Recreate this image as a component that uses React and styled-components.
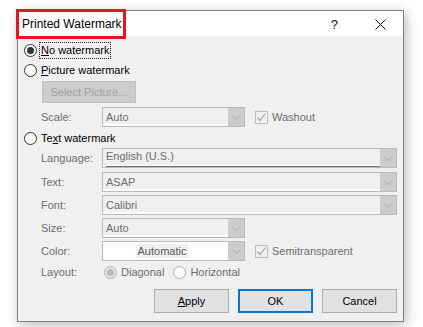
import React from 'react'
import styled, { createGlobalStyle } from 'styled-components'

const Global = createGlobalStyle`
    html, body {
        margin: 0;
        padding: 0;
        background: #ffffff;
    }
    body {
        font-family: "Liberation Sans", Arial, sans-serif;
        font-size: 11px;
        color: #000;
    }
`

function Chevron() {
    return (
        <svg width="9" height="5" viewBox="0 0 9 5">
            <path d="M0.5 0.5 L4.5 4.5 L8.5 0.5" fill="none" stroke="#a9a9a9" strokeWidth="1" />
        </svg>
    )
}

function Combo({ width, value, center, white, language }) {
    return (
        <ComboBox $width={width} $white={white}>
            <ComboField $center={center}>
                {language ? (
                    <LangValue>{value}</LangValue>
                ) : center ? (
                    <Highlight>{value}</Highlight>
                ) : (
                    value
                )}
            </ComboField>
            <ComboArrow>
                <Chevron />
            </ComboArrow>
        </ComboBox>
    )
}

function Check({ label }) {
    return (
        <CheckWrap>
            <CheckBox>
                <svg width="11" height="11" viewBox="0 0 11 11">
                    <path d="M1.5 5.5 L4 8.5 L9.5 1.5" fill="none" stroke="#a6a6a6" strokeWidth="1.2" />
                </svg>
            </CheckBox>
            <GreyText>{label}</GreyText>
        </CheckWrap>
    )
}

function App() {
    return (
        <Page>
            <Global />
            <Window>
                <TitleBar>
                    <Title>Printed Watermark</Title>
                    <TitleButtons>
                        <Help>?</Help>
                        <svg width="11" height="11" viewBox="0 0 11 11">
                            <path d="M0.5 0.5 L10.5 10.5 M10.5 0.5 L0.5 10.5" stroke="#111" strokeWidth="1" />
                        </svg>
                    </TitleButtons>
                </TitleBar>
                <Body>
                    <RadioRow $top={6}>
                        <Radio $checked />
                        <Focus><u>N</u>o watermark</Focus>
                    </RadioRow>
                    <RadioRow $top={4}>
                        <Radio />
                        <span><u>P</u>icture watermark</span>
                    </RadioRow>
                    <SelectButton>Select Picture...</SelectButton>
                    <FieldRow $top={4}>
                        <Label>Scale:</Label>
                        <Combo width={143} value="Auto" />
                        <Check label="Washout" />
                    </FieldRow>
                    <RadioRow $top={3}>
                        <Radio />
                        <span>Te<u>x</u>t watermark</span>
                    </RadioRow>
                    <FieldRow $top={2}>
                        <Label>Language:</Label>
                        <Combo width={295} value="English (U.S.)" language />
                    </FieldRow>
                    <FieldRow $top={4}>
                        <Label>Text:</Label>
                        <Combo width={295} value="ASAP" />
                    </FieldRow>
                    <FieldRow $top={3}>
                        <Label>Font:</Label>
                        <Combo width={295} value="Calibri" />
                    </FieldRow>
                    <FieldRow $top={3}>
                        <Label>Size:</Label>
                        <Combo width={143} value="Auto" />
                    </FieldRow>
                    <FieldRow $top={3}>
                        <Label>Color:</Label>
                        <Combo width={143} value="Automatic" center white />
                        <Check label="Semitransparent" />
                    </FieldRow>
                    <FieldRow $top={3} $height={16}>
                        <Label>Layout:</Label>
                        <LayoutOption $left={2}>
                            <SmallRadio $checked />
                            <GreyText>Diagonal</GreyText>
                        </LayoutOption>
                        <LayoutOption $left={9}>
                            <SmallRadio />
                            <GreyText>Horizontal</GreyText>
                        </LayoutOption>
                    </FieldRow>
                    <ButtonRow>
                        <DialogButton><u>A</u>pply</DialogButton>
                        <DialogButton $primary>OK</DialogButton>
                        <DialogButton>Cancel</DialogButton>
                    </ButtonRow>
                </Body>
            </Window>
            <Marker />
        </Page>
    )
}

export default App

const Page = styled.div`
    position: relative;
    width: 423px;
    height: 327px;
    padding: 10px 0 0 17px;
    box-sizing: border-box;
    overflow: hidden;
`

const Window = styled.div`
    width: 387px;
    height: 312px;
    box-sizing: border-box;
    border: 1px solid #7f7f7f;
    background: #f0f0f0;
    box-shadow: 2px 3px 12px rgba(0, 0, 0, 0.28);
    display: flex;
    flex-direction: column;
`

const TitleBar = styled.div`
    height: 25px;
    background: #ffffff;
    display: flex;
    align-items: center;
    justify-content: space-between;
    padding: 0 17px 0 4px;
`

const Title = styled.div`
    font-size: 12px;
    color: #000;
    padding-top: 1px;
`

const TitleButtons = styled.div`
    display: flex;
    align-items: center;
    gap: 37px;
    padding-top: 1px;
`

const Help = styled.span`
    font-size: 13px;
    color: #111;
`

const Body = styled.div`
    display: flex;
    flex-direction: column;
    padding: 0 6px;
`

const RadioRow = styled.div`
    display: flex;
    align-items: center;
    height: 16px;
    margin-top: ${p => p.$top}px;
    gap: 4px;
`

const Radio = styled.span`
    width: 13px;
    height: 13px;
    box-sizing: border-box;
    border-radius: 50%;
    border: 1px solid #333;
    background: #fff;
    position: relative;
    flex: none;
    &::after {
        content: '';
        display: ${p => (p.$checked ? 'block' : 'none')};
        position: absolute;
        left: 2px;
        top: 2px;
        width: 7px;
        height: 7px;
        border-radius: 50%;
        background: #333;
    }
`

const SmallRadio = styled(Radio)`
    border-color: #b0b0b0;
    background: ${p => (p.$checked ? '#e6e6e6' : '#fff')};
    &::after {
        background: #b8b8b8;
    }
`

const Focus = styled.span`
    outline: 1px dotted #222;
    outline-offset: 0;
    padding: 1px 1px 2px 1px;
    margin-left: -1px;
`

const SelectButton = styled.div`
    margin: 3px 0 0 18px;
    width: 94px;
    height: 22px;
    box-sizing: border-box;
    background: #cccccc;
    border: 1px solid #bfbfbf;
    color: #a3a3a3;
    display: flex;
    align-items: center;
    justify-content: center;
`

const FieldRow = styled.div`
    display: flex;
    align-items: center;
    height: ${p => p.$height || 20}px;
    margin-top: ${p => p.$top}px;
    padding-left: 17px;
`

const Label = styled.span`
    width: 61px;
    flex: none;
    color: #6d6d6d;
`

const ComboBox = styled.div`
    width: ${p => p.$width}px;
    height: 20px;
    box-sizing: border-box;
    border: 1px solid #bababa;
    display: flex;
    background: ${p => (p.$white ? '#ffffff' : '#f0f0f0')};
    box-shadow: inset -2px -2px 0 #ffffff;
`

const ComboField = styled.div`
    flex: 1;
    display: flex;
    align-items: center;
    justify-content: ${p => (p.$center ? 'center' : 'flex-start')};
    padding-left: 3px;
    color: #6d6d6d;
    overflow: hidden;
`

const LangValue = styled.span`
    display: block;
    width: 100%;
    height: 17px;
    line-height: 15px;
    border-bottom: 3px double #6d6d6d;
    margin-top: 1px;
`

const Highlight = styled.span`
    background: #f0f0f0;
    padding: 1px 2px;
    color: #555;
    margin-right: 10px;
`

const ComboArrow = styled.div`
    width: 16px;
    flex: none;
    background: #cccccc;
    display: flex;
    align-items: center;
    justify-content: center;
    margin: -1px -1px -1px 0;
    border: 1px solid #bababa;
    border-left: none;
`

const CheckWrap = styled.div`
    display: flex;
    align-items: center;
    gap: 4px;
    margin-left: 10px;
`

const CheckBox = styled.span`
    width: 13px;
    height: 13px;
    box-sizing: border-box;
    border: 1px solid #bcbcbc;
    background: #f0f0f0;
    display: flex;
    align-items: center;
    justify-content: center;
`

const GreyText = styled.span`
    color: #6d6d6d;
`

const LayoutOption = styled.div`
    display: flex;
    align-items: center;
    gap: 4px;
    margin-left: ${p => p.$left}px;
`

const ButtonRow = styled.div`
    display: flex;
    justify-content: flex-end;
    gap: 9px;
    margin-top: 9px;
`

const DialogButton = styled.div`
    width: 75px;
    height: 24px;
    box-sizing: border-box;
    background: #e1e1e1;
    border: ${p => (p.$primary ? '2px solid #0078d7' : '1px solid #adadad')};
    display: flex;
    align-items: center;
    justify-content: center;
    color: #000;
`

const Marker = styled.div`
    position: absolute;
    left: 16px;
    top: 9px;
    width: 110px;
    height: 30px;
    box-sizing: border-box;
    border: 3px solid #e8141c;
    pointer-events: none;
`
